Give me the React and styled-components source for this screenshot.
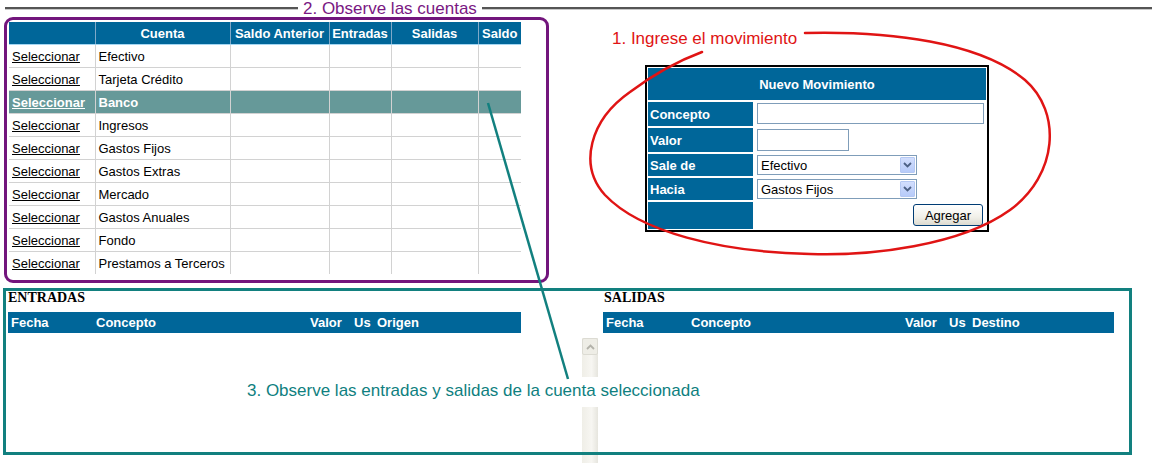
import styled, { createGlobalStyle } from 'styled-components'

const GlobalStyle = createGlobalStyle`
	body {
		margin: 0;
		background: #fff;
	}
`

const Page = styled.div`
	position: relative;
	width: 1152px;
	height: 463px;
	overflow: hidden;
	background: #fff;
	font-family: "Liberation Sans", Arial, sans-serif;
`

const Legend = styled.div`
	display: flex;
	align-items: center;
	height: 17px;
	padding-left: 5px;
`

const LegendLine = styled.div`
	height: 2px;
	background: #555;
	border-bottom: 1px solid #c8c8c8;
	width: ${p => p.$width || 'auto'};
	flex: ${p => (p.$width ? 'none' : '1')};
`

const LegendText = styled.span`
	margin: 0 5px;
	font-size: 17px;
	line-height: 17px;
	color: #7a1883;
	white-space: nowrap;
`

const Upper = styled.div`
	display: flex;
	align-items: flex-start;
`

const AccountsBox = styled.div`
	box-sizing: border-box;
	margin-left: 4px;
	width: 545px;
	height: 266px;
	padding: 2px;
	border: 3px solid #72157c;
	border-radius: 9px;
`

const Accounts = styled.table`
	border-collapse: collapse;
	table-layout: fixed;
	width: 512px;
	font-size: 13px;
	color: #000;
`

const Th = styled.th`
	height: 22px;
	padding: 0 2px;
	background: #006699;
	color: #fff;
	font-weight: bold;
	text-align: center;
	white-space: nowrap;
	overflow: hidden;
	border-right: 1px solid #7fa9c8;
	border-bottom: 1px solid #a4d6f2;

	&:last-child {
		border-right: none;
	}
`

const Row = styled.tr`
	background: ${p => (p.$active ? '#669999' : '#fff')};
	color: ${p => (p.$active ? '#fff' : '#000')};
	font-weight: ${p => (p.$active ? 'bold' : 'normal')};

	&:last-child td {
		border-bottom: none;
	}
`

const Td = styled.td`
	height: 22px;
	padding: 0 3px;
	white-space: nowrap;
	overflow: hidden;
	border-right: 1px solid #d2d2d2;
	border-bottom: 1px solid #d2d2d2;

	&:last-child {
		border-right: none;
	}
`

const Pick = styled.a`
	color: inherit;
	text-decoration: underline;
`

const MoveForm = styled.form`
	display: grid;
	grid-template-columns: 105px 230px;
	grid-template-rows: 32px 24px 24px 22px 22px 27px;
	gap: 2px 3px;
	margin: 48px 0 0 96px;
	padding: 1px;
	border: 2px solid #000;
	background: #fff;
	font-size: 13px;
`

const FormTitle = styled.div`
	grid-column: span 2;
	display: flex;
	align-items: center;
	justify-content: center;
	background: #006699;
	color: #fff;
	font-weight: bold;
`

const Label = styled.div`
	display: flex;
	align-items: center;
	padding-left: 2px;
	background: #006699;
	color: #fff;
	font-weight: bold;
`

const Field = styled.div`
	display: flex;
	align-items: flex-start;
	justify-content: ${p => (p.$end ? 'flex-end' : 'flex-start')};
	padding: ${p => p.$pad || '1px 0 0 1px'};
`

const TextInput = styled.input`
	box-sizing: border-box;
	width: ${p => p.$width};
	height: ${p => p.$height};
	margin: 0;
	padding: 0 2px;
	border: 1px solid #7f9db9;
	font: 13px "Liberation Sans", Arial, sans-serif;
`

const SelectBox = styled.div`
	box-sizing: border-box;
	display: flex;
	align-items: center;
	justify-content: space-between;
	width: 160px;
	height: 20px;
	padding: 0 1px 0 3px;
	border: 1px solid #7f9db9;
	background: #fff;
	color: #000;
`

const SelectArrow = styled.span`
	box-sizing: border-box;
	display: flex;
	align-items: center;
	justify-content: center;
	width: 15px;
	height: 16px;
	border: 1px solid #b5c8f3;
	border-radius: 1px;
	background: linear-gradient(#d2defd, #b7cbf9);
`

const AddButton = styled.button`
	box-sizing: border-box;
	width: 70px;
	height: 22px;
	margin: 0;
	padding: 0;
	border: 1px solid #003c74;
	border-radius: 3px;
	background: linear-gradient(#ffffff, #f1f0e9 60%, #dcdad0);
	color: #000;
	font: 13px "Liberation Sans", Arial, sans-serif;
`

const Movements = styled.div`
	position: relative;
	box-sizing: border-box;
	display: flex;
	align-items: flex-start;
	width: 1129px;
	height: 167px;
	margin: 5px 0 0 3px;
	padding: 3px 0 0 5px;

	&::after {
		content: '';
		position: absolute;
		inset: 0;
		border: 3px solid #12807f;
		pointer-events: none;
	}
`

const Ledger = styled.div`
	width: ${p => p.$width};
	margin-left: ${p => p.$offset || '0'};
`

const LedgerTitle = styled.div`
	height: 14px;
	margin-bottom: 7px;
	padding-left: ${p => p.$indent || '0'};
	font: bold 14px/14px "Liberation Serif", "Times New Roman", serif;
	color: #000;
`

const LedgerHead = styled.div`
	display: grid;
	grid-template-columns: 85px 214px 44px 23px 1fr;
	align-items: center;
	height: 21px;
	background: #006699;
	color: #fff;
	font-size: 13px;
	font-weight: bold;

	& span {
		padding-left: 3px;
		white-space: nowrap;
	}
`

const ScrollTrack = styled.div`
	width: 16px;
	height: 126px;
	margin: 47px 0 0 61px;
	background: linear-gradient(to right, #efeee7, #f7f6f2 60%, #e6e5de);
`

const ScrollUp = styled.div`
	box-sizing: border-box;
	display: flex;
	align-items: center;
	justify-content: center;
	height: 17px;
	border: 1px solid #dcdbd3;
	border-radius: 2px;
	background: #eeede6;
`

const Note = styled.div`
	position: absolute;
	left: ${p => p.$x}px;
	top: ${p => p.$y}px;
	padding: ${p => p.$pad || '0'};
	background: ${p => p.$bg || 'transparent'};
	color: ${p => p.$color};
	font-size: 17px;
	line-height: 20px;
	white-space: nowrap;
`

const Marks = styled.svg`
	position: absolute;
	top: 0;
	left: 0;
	pointer-events: none;
`

const cuentas = ['Efectivo', 'Tarjeta Crédito', 'Banco', 'Ingresos', 'Gastos Fijos', 'Gastos Extras', 'Mercado', 'Gastos Anuales', 'Fondo', 'Prestamos a Terceros']
const columnas = [86, 135, 99, 62, 87, 43]

const Chevron = ({ color, up }) => (
	<svg width="9" height="6" viewBox="0 0 9 6">
		<path d={up ? 'M1 5 L4.5 1.5 L8 5' : 'M1 1 L4.5 4.5 L8 1'} fill="none" stroke={color} strokeWidth="1.8" />
	</svg>
)

const Select = ({ value }) => (
	<SelectBox>
		<span>{value}</span>
		<SelectArrow><Chevron color="#4d6185" /></SelectArrow>
	</SelectBox>
)

const App = () => {
	return (
		<Page>
			<GlobalStyle />
			<Legend>
				<LegendLine $width="293px" />
				<LegendText>2. Observe las cuentas</LegendText>
				<LegendLine />
			</Legend>

			<Upper>
				<AccountsBox>
					<Accounts>
						<colgroup>
							{columnas.map((w, i) => <col key={i} style={{ width: w }} />)}
						</colgroup>
						<thead>
							<tr>
								<Th></Th>
								<Th>Cuenta</Th>
								<Th>Saldo Anterior</Th>
								<Th>Entradas</Th>
								<Th>Salidas</Th>
								<Th>Saldo</Th>
							</tr>
						</thead>
						<tbody>
							{cuentas.map(c => (
								<Row key={c} $active={c === 'Banco'}>
									<Td><Pick href="#">Seleccionar</Pick></Td>
									<Td>{c}</Td>
									<Td></Td>
									<Td></Td>
									<Td></Td>
									<Td></Td>
								</Row>
							))}
						</tbody>
					</Accounts>
				</AccountsBox>

				<MoveForm>
					<FormTitle>Nuevo Movimiento</FormTitle>
					<Label>Concepto</Label>
					<Field><TextInput $width="227px" $height="21px" /></Field>
					<Label>Valor</Label>
					<Field><TextInput $width="92px" $height="22px" /></Field>
					<Label>Sale de</Label>
					<Field><Select value="Efectivo" /></Field>
					<Label>Hacia</Label>
					<Field><Select value="Gastos Fijos" /></Field>
					<Label></Label>
					<Field $end $pad="2px 3px 0 0"><AddButton type="button">Agregar</AddButton></Field>
				</MoveForm>
			</Upper>

			<Movements>
				<Ledger $width="513px">
					<LedgerTitle>ENTRADAS</LedgerTitle>
					<LedgerHead>
						<span>Fecha</span>
						<span>Concepto</span>
						<span>Valor</span>
						<span>Us</span>
						<span>Origen</span>
					</LedgerHead>
				</Ledger>
				<ScrollTrack>
					<ScrollUp><Chevron color="#b3b2aa" up /></ScrollUp>
				</ScrollTrack>
				<Ledger $width="511px" $offset="5px">
					<LedgerTitle $indent="1px">SALIDAS</LedgerTitle>
					<LedgerHead>
						<span>Fecha</span>
						<span>Concepto</span>
						<span>Valor</span>
						<span>Us</span>
						<span>Destino</span>
					</LedgerHead>
				</Ledger>
			</Movements>

			<Note $x={612} $y={29} $color="#e01414">1. Ingrese el movimiento</Note>
			<Note $x={243} $y={377} $pad="4px 4px 6px" $bg="#fff" $color="#0f7f7f">
				3. Observe las entradas y salidas de la cuenta seleccionada
			</Note>

			<Marks width="1152" height="463" viewBox="0 0 1152 463">
				<path
					d="M805 33 C890 31 980 42 1025 80 C1062 112 1058 175 1010 210 C960 246 870 256 810 254 C720 252 640 232 605 195 C578 165 590 120 630 92 C650 77 675 62 702 52"
					fill="none"
					stroke="#e01414"
					strokeWidth="2.5"
					strokeLinecap="round"
				/>
				<line x1="488" y1="103" x2="568" y2="379" stroke="#12807f" strokeWidth="2.5" />
			</Marks>
		</Page>
	)
}

export default App
